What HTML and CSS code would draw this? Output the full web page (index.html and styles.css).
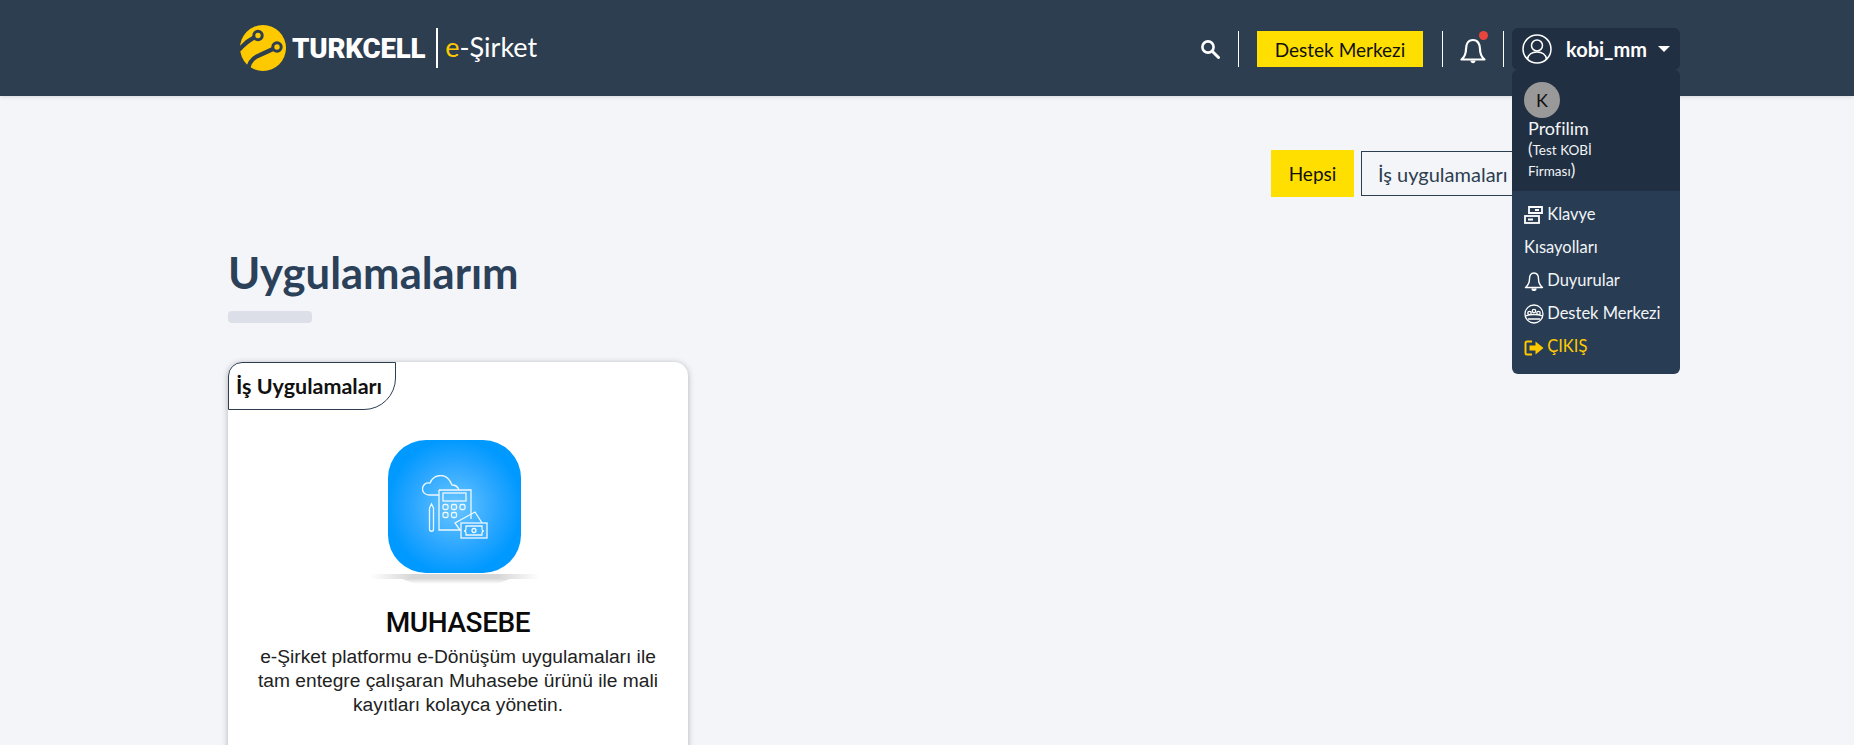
FILE: index.html
```html
<!DOCTYPE html>
<html lang="tr">
<head>
    <meta charset="UTF-8">
    <title>e-Şirket</title>
    <link rel="stylesheet" href="styles.css">
</head>
<body>
    <header class="topbar">
        <a class="brand">
            <svg class="brand-mark" width="46" height="46" viewBox="0 0 46 46">
                <circle cx="23" cy="23" r="23" fill="#ffc900"/>
                <path d="M-1 25C4 19 9 15 15 12" fill="none" stroke="#2c3e50" stroke-width="4.2"/>
                <path d="M8 45C9 37 14 32 20 30L33 24" fill="none" stroke="#2c3e50" stroke-width="4.2"/>
                <circle cx="18" cy="10.500" r="4.200" fill="#ffc900" stroke="#2c3e50" stroke-width="3"/>
                <circle cx="37" cy="22" r="4.200" fill="#ffc900" stroke="#2c3e50" stroke-width="3"/>
            </svg>
            <span class="brand-name">TURKCELL</span>
            <span class="brand-line"></span>
            <span class="brand-sub"><span class="brand-e">e</span>-Şirket</span>
        </a>
        <div class="topbar-right">
            <svg class="search-icon" width="20" height="20" viewBox="0 0 20 20">
                <circle cx="8" cy="8" r="5.600" fill="none" stroke="#fff" stroke-width="2.600"/>
                <path d="M12.500 12.500L18.500 18.500" stroke="#fff" stroke-width="3" stroke-linecap="round"/>
            </svg>
            <span class="vline"></span>
            <a class="support-btn">Destek Merkezi</a>
            <span class="vline"></span>
            <span class="bell">
                <svg width="26" height="28" viewBox="0 0 26 28">
                    <path d="M13 3C8 3 6 7.500 6 12C6 17 4.500 20 1.500 22.500H24.500C21.500 20 20 17 20 12C20 7.500 18 3 13 3Z" fill="none" stroke="#fff" stroke-width="2.200" stroke-linejoin="round"/>
                    <path d="M10.500 23.500C10.500 27 15.500 27 15.500 23.500Z" fill="#fff"/>
                </svg>
                <span class="bell-dot"></span>
            </span>
            <span class="vline"></span>
            <div class="user-menu">
                <div class="user-toggle">
                    <svg width="30" height="30" viewBox="0 0 30 30">
                        <circle cx="15" cy="15" r="14" fill="none" stroke="#fff" stroke-width="1.500"/>
                        <circle cx="15" cy="11.500" r="5.500" fill="none" stroke="#fff" stroke-width="1.500"/>
                        <path d="M5.500 25C6.500 20 10 18 15 18C20 18 23.500 20 24.500 25" fill="none" stroke="#fff" stroke-width="1.500"/>
                    </svg>
                    <span class="user-name">kobi_mm</span>
                    <span class="caret"></span>
                </div>
                <div class="dropdown">
                    <div class="dropdown-head">
                        <div class="avatar">K</div>
                        <div class="profile-name">Profilim</div>
                        <div class="profile-firm"><span class="paren">(</span>Test KOBİ<br>Firması<span class="paren">)</span></div>
                    </div>
                    <ul class="dropdown-list">
                        <li>
                            <svg width="20" height="20" viewBox="0 0 20 20" fill="none" stroke="#fff" stroke-width="1.800">
                                <path d="M5 9V2H18V8H5"/><path d="M11 5H15"/><rect x="1" y="11" width="14" height="7"/><path d="M4 14.500H9"/>
                            </svg>
                            Klavye Kısayolları
                        </li>
                        <li>
                            <svg width="20" height="20" viewBox="0 0 20 20" fill="none" stroke="#fff" stroke-width="1.400">
                                <path d="M10 2C6.500 2 5.500 5 5.500 8C5.500 12 4 14.500 1.500 16.500H18.500C16 14.500 14.500 12 14.500 8C14.500 5 13.500 2 10 2Z" stroke-linejoin="round"/>
                                <path d="M8 17.500C8 20 12 20 12 17.500" fill="#fff"/>
                            </svg>
                            Duyurular
                        </li>
                        <li>
                            <svg width="20" height="20" viewBox="0 0 20 20" fill="none" stroke="#fff" stroke-width="1.300">
                                <circle cx="10" cy="10" r="9"/><path d="M2 12C5 10 15 10 18 12"/><path d="M4 15H16"/>
                                <circle cx="5.500" cy="9" r="1.700"/><circle cx="10" cy="7" r="1.700"/><circle cx="14.500" cy="9" r="1.700"/>
                            </svg>
                            Destek Merkezi
                        </li>
                        <li class="logout">
                            <svg width="20" height="18" viewBox="0 0 20 18">
                                <path d="M8 2.500H3C2 2.500 1.500 3 1.500 4V14C1.500 15 2 15.500 3 15.500H8" fill="none" stroke="#ffc900" stroke-width="2"/>
                                <path d="M5.500 6.500H11.500V2.500L19.500 9L11.500 15.500V11.500H5.500Z" fill="#ffc900"/>
                            </svg>
                            ÇIKIŞ
                        </li>
                    </ul>
                </div>
            </div>
        </div>
    </header>

    <main class="content">
        <div class="filters">
            <a class="filter filter-active">Hepsi</a>
            <a class="filter">İş uygulamaları</a>
        </div>

        <h1 class="page-title">Uygulamalarım</h1>
        <div class="title-bar"></div>

        <section class="app-card">
            <span class="app-tag">İş Uygulamaları</span>
            <div class="app-icon-wrap">
                <div class="app-icon">
                    <svg width="66" height="64" viewBox="0 0 66 64" fill="none" stroke="#eef8ff" stroke-width="1.300">
                        <path d="M17 20H7C3 20 0.500 17 0.500 14C0.500 10 4 7 8 8C10 3 14 0.500 19 0.500C25 0.500 28 5 30 10C33 10 36 12 37 15"/>
                        <path d="M17 15H49V44"/>
                        <path d="M17 15V55H39"/>
                        <rect x="21" y="18" width="23" height="8"/>
                        <rect x="21" y="29.500" width="5" height="5" rx="1.500"/>
                        <rect x="29.500" y="29.500" width="5" height="5" rx="1.500"/>
                        <rect x="38" y="29.500" width="5" height="5" rx="1.500"/>
                        <rect x="21" y="37.500" width="5" height="5" rx="1.500"/>
                        <rect x="29.500" y="37.500" width="5" height="5" rx="1.500"/>
                        <path d="M7.500 33L9.500 29L11.500 33V54C11.500 57 7.500 57 7.500 54Z"/>
                        <path d="M38 55L33 48L53 37L60 48"/>
                        <rect x="39" y="48" width="26" height="15" fill="#3fb0ff"/>
                        <path d="M44 51H60V53C60 55 60 56 62 56C60 56 60 57 60 60H44C44 57 44 56 42 56C44 56 44 55 44 51Z"/>
                        <circle cx="52" cy="55.500" r="2"/>
                    </svg>
                </div>
                <div class="app-icon-shadow"></div>
            </div>
            <h2 class="app-title">MUHASEBE</h2>
            <p class="app-text">e-Şirket platformu e-Dönüşüm uygulamaları ile tam entegre çalışaran Muhasebe ürünü ile mali kayıtları kolayca yönetin.</p>
        </section>
    </main>
</body>
</html>
```

FILE: styles.css
```css
* {
    box-sizing: border-box;
}

html, body {
    height: 745px;
    overflow: hidden;
}

body {
    margin: 0;
    background-color: #f3f5f9;
    font-family: 'Lato', 'Noto Sans', sans-serif;
    color: #2c3e50;
}

.topbar {
    height: 96px;
    padding: 25px 174px 0 240px;
    display: flex;
    justify-content: space-between;
    align-items: flex-start;
    background-color: #2c3e50;
    box-shadow: 0 1px 4px rgba(0, 0, 0, 0.12);
}

.brand {
    display: flex;
    align-items: center;
    height: 46px;
}

.brand-name {
    margin-left: 6px;
    color: #fff;
    font-family: 'Roboto', sans-serif;
    font-size: 27.7px;
    font-weight: 900;
    letter-spacing: -0.2px;
}

.brand-line {
    width: 2px;
    height: 40px;
    margin: 0 7px 0 11px;
    background-color: #fff;
}

.brand-sub {
    color: #fff;
    font-size: 27px;
    line-height: 44px;
    align-self: flex-start;
}

.brand-e {
    color: #ffc900;
}

.topbar-right {
    display: flex;
    align-items: center;
    margin-top: 3px;
    height: 42px;
}

.search-icon {
    margin-right: 18px;
}

.vline {
    width: 1px;
    height: 36px;
    background-color: #fff;
}

.support-btn {
    width: 166px;
    height: 36px;
    margin: 0 19px 0 18px;
    display: flex;
    align-items: center;
    justify-content: center;
    background-color: #ffdf00;
    color: #111;
    font-size: 19px;
}

.bell {
    position: relative;
    display: block;
    width: 26px;
    height: 28px;
    margin: 4px 17px 0;
}

.bell-dot {
    position: absolute;
    top: -6px;
    right: -2px;
    width: 9px;
    height: 9px;
    border-radius: 50%;
    background-color: #e8453c;
}

.user-menu {
    position: relative;
    width: 168px;
    margin-left: 8px;
}

.user-toggle {
    height: 42px;
    padding: 0 10px;
    display: flex;
    align-items: center;
    background-color: #202f42;
    border-radius: 6px;
    color: #fff;
}

.user-name {
    margin-left: 14px;
    font-size: 20px;
    font-weight: 700;
}

.caret {
    margin-left: 11px;
    border-left: 6px solid transparent;
    border-right: 6px solid transparent;
    border-top: 6px solid #fff;
}

.dropdown {
    position: absolute;
    top: 42px;
    left: 0;
    width: 168px;
    height: 304px;
    background-color: #283d54;
    border-radius: 6px;
    color: #f2f4f6;
    overflow: hidden;
}

.dropdown-head {
    height: 121px;
    padding: 12px 12px 0;
    background-color: #202f42;
}

.avatar {
    width: 36px;
    height: 36px;
    display: flex;
    align-items: center;
    justify-content: center;
    border-radius: 50%;
    background-color: #999;
    color: #111;
    font-size: 18px;
}

.profile-name {
    margin: -1px 0 0 4px;
    font-size: 18px;
    line-height: 22px;
}

.profile-firm {
    margin: 0 0 0 4px;
    font-size: 13.5px;
    line-height: 20px;
}

.paren {
    font-size: 17px;
}

.dropdown-list {
    list-style: none;
    margin: 0;
    padding: 7px 12px 0;
    font-size: 16.5px;
    line-height: 33px;
}

.dropdown-list svg {
    vertical-align: -5px;
    margin-right: -1px;
}

.logout {
    color: #ffc900;
}

.content {
    padding: 54px 174px 0 228px;
}

.filters {
    display: flex;
    gap: 7px;
    justify-content: flex-end;
    height: 47px;
    margin-right: 0;
}

.filter {
    height: 47px;
    display: flex;
    align-items: center;
    justify-content: center;
    font-size: 19px;
    color: #2c3e50;
}

.filter-active {
    width: 83px;
    background-color: #ffdf00;
    color: #111;
}

.filter:not(.filter-active) {
    width: 319px;
    height: 45px;
    margin-top: 1px;
    padding: 0 0 0 16px;
    justify-content: flex-start;
    border: 1px solid #2c3e50;
    font-size: 20px;
}

.page-title {
    margin: 50px 0 0;
    font-size: 43.6px;
    line-height: 50px;
    font-weight: 700;
    color: #2b4059;
}

.title-bar {
    width: 84px;
    height: 12px;
    margin-top: 14px;
    border-radius: 4px;
    background-color: #dcdfe8;
}

.app-card {
    position: relative;
    width: 460px;
    height: 520px;
    margin-top: 39px;
    padding: 78px 24px 0;
    background-color: #fff;
    border-radius: 14px;
    box-shadow: 0 1px 6px rgba(0, 0, 0, 0.28);
    text-align: center;
}

.app-tag {
    position: absolute;
    top: 0;
    left: 0;
    width: 168px;
    height: 48px;
    padding-left: 7px;
    display: flex;
    align-items: center;
    border: 1px solid #2c3e50;
    border-radius: 14px 0 32px 0;
    color: #111;
    font-size: 21.5px;
    font-weight: 700;
}

.app-icon-wrap {
    position: relative;
    width: 133px;
    height: 145px;
    margin: 0 auto;
    left: -4px;
}

.app-icon {
    width: 133px;
    height: 133px;
    padding-top: 35px;
    padding-left: 34px;
    border-radius: 38px;
    background: radial-gradient(circle, #6ac6ff 0%, #2aa6ff 45%, #0099ff 72%);
    text-align: left;
}

.app-icon svg {
    display: block;
}

.app-icon-shadow {
    position: absolute;
    top: 134px;
    left: -18px;
    width: 170px;
    height: 5px;
    background: linear-gradient(90deg, rgba(0, 0, 0, 0) 0%, rgba(0, 0, 0, 0.16) 25%, rgba(0, 0, 0, 0.16) 75%, rgba(0, 0, 0, 0) 100%);
}

.app-icon-shadow::after {
    content: "";
    position: absolute;
    top: 5px;
    left: 33px;
    width: 107px;
    height: 5px;
    background: linear-gradient(180deg, rgba(0, 0, 0, 0.14), rgba(0, 0, 0, 0));
    clip-path: polygon(0 0, 100% 0, 88% 100%, 12% 100%);
}

.app-title {
    margin: 20px 0 4px;
    font-family: 'Roboto', sans-serif;
    font-size: 28px;
    line-height: 36px;
    font-weight: 500;
    letter-spacing: -0.4px;
    color: #0a0a0a;
}

.app-text {
    margin: 0;
    font-family: 'Liberation Sans', Arial, sans-serif;
    font-size: 19.2px;
    line-height: 24px;
    color: #222;
}
```
